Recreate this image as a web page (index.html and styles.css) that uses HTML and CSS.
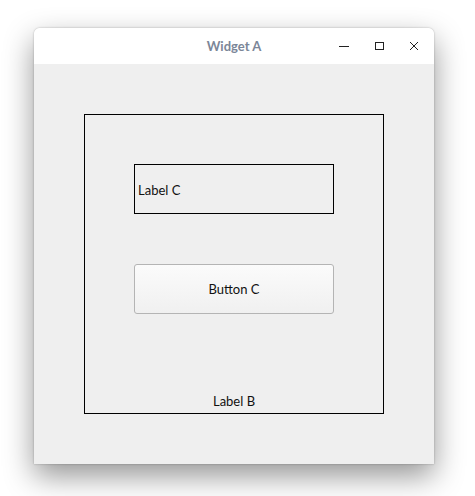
FILE: index.html
```html
<!DOCTYPE html>
<html>
<head>
<meta charset="utf-8">
<link rel="stylesheet" href="styles.css">
</head>
<body>
<div class="window">
  <div class="titlebar">
    <div class="title">Widget A</div>
    <div class="controls">
      <svg class="ctl" width="12" height="12" viewBox="0 0 12 12"><path d="M1 6.5H11" stroke="#222" stroke-width="1"/></svg>
      <svg class="ctl" width="12" height="12" viewBox="0 0 12 12"><rect x="2.5" y="2.5" width="8" height="7" fill="none" stroke="#222" stroke-width="1"/></svg>
      <svg class="ctl" width="12" height="12" viewBox="0 0 12 12"><path d="M2 2L10 10M10 2L2 10" stroke="#222" stroke-width="1"/></svg>
    </div>
  </div>
  <div class="content">
    <div class="frame-b">
      <div class="label-c">Label C</div>
      <button class="button-c">Button C</button>
      <div class="label-b">Label B</div>
    </div>
  </div>
</div>
</body>
</html>
```
FILE: styles.css
```css
html, body {
  margin: 0;
  padding: 0;
  background: #ffffff;
}
body {
  width: 475px;
  height: 496px;
  overflow: hidden;
  font-family: "Lato", "Open Sans", sans-serif;
  font-size: 13px;
  color: #111;
}
.window {
  margin: 28px 0 0 34px;
  width: 400px;
  height: 436px;
  border-radius: 6px 6px 0 0;
  box-shadow: 0 12px 30px rgba(0,0,0,0.42), 0 0 2px rgba(0,0,0,0.3);
  display: flex;
  flex-direction: column;
  overflow: hidden;
}
.titlebar {
  height: 36px;
  background: #ffffff;
  position: relative;
  display: flex;
  align-items: center;
  justify-content: center;
}
.title {
  font-weight: bold;
  font-size: 13px;
  color: #7b8698;
}
.controls {
  position: absolute;
  right: 14px;
  top: 12px;
  display: flex;
  gap: 23px;
}
.ctl { display: block; }
.content {
  flex: 1;
  background: #efefef;
  padding: 50px;
}
.frame-b {
  width: 300px;
  height: 300px;
  box-sizing: border-box;
  border: 1px solid #000;
  padding: 49px 49px 4px 49px;
  display: flex;
  flex-direction: column;
}
.label-c {
  width: 200px;
  height: 50px;
  box-sizing: border-box;
  border: 1px solid #000;
  display: flex;
  align-items: center;
  padding-left: 3px;
  padding-top: 1px;
}
.button-c {
  margin-top: 50px;
  width: 200px;
  height: 50px;
  box-sizing: border-box;
  border: 1px solid #b4b4b4;
  border-radius: 3px;
  background: linear-gradient(#fbfbfb, #f0f0f0);
  font: inherit;
  color: #111;
  padding: 0;
}
.label-b {
  margin-top: auto;
  text-align: center;
  align-self: center;
}
```
